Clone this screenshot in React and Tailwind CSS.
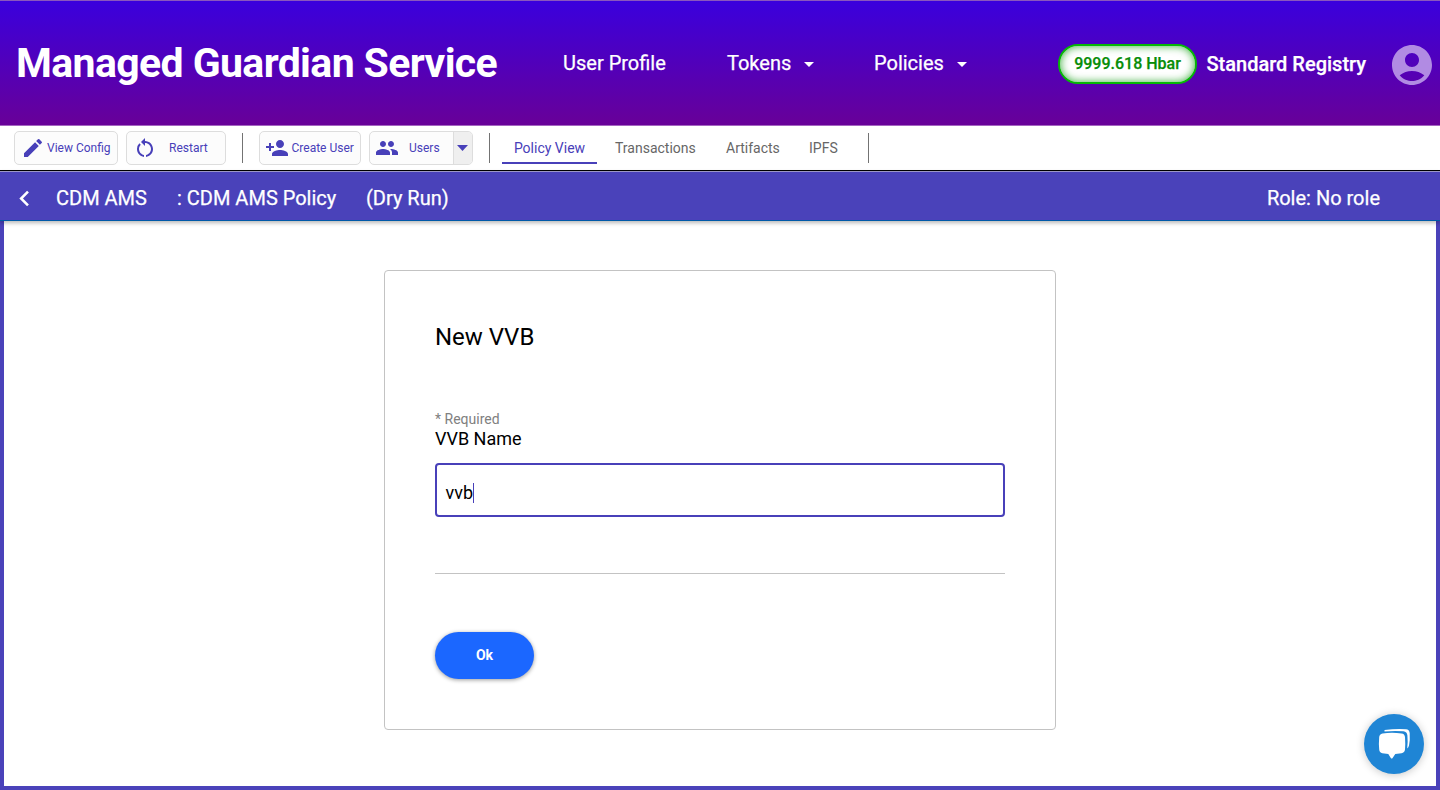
import { MdEdit, MdRestartAlt, MdPersonAdd, MdPeople, MdNavigateBefore, MdAccountCircle } from "react-icons/md";

function NavItem({ label, className, caret }) {
  return (
    <div className={"flex items-center text-[20px] leading-6 text-white [-webkit-text-stroke:0.25px_white] " + className}>
      <span>{label}</span>
      {caret && (
        <svg width="10" height="5" viewBox="0 0 10 5" className="ml-auto mt-[2px] shrink-0">
          <path d="M0 0h10L5 5z" fill="#fff" />
        </svg>
      )}
    </div>
  );
}

function Divider({ className }) {
  return <div className={"h-[30px] w-px shrink-0 bg-[#737373] " + className} />;
}

function ToolButton({ icon: Icon, label, className, labelClass }) {
  return (
    <button className={"flex h-[34px] shrink-0 items-center whitespace-nowrap rounded-[5px] border border-[#dddddd] bg-[#fcfcfc] text-[12px] text-[#4840b9] " + className}>
      <Icon size={24} className="shrink-0" />
      <span className={labelClass}>{label}</span>
    </button>
  );
}

function Header() {
  return (
    <header className="flex h-[126px] items-center whitespace-nowrap border-b border-t border-b-[#a465c0] border-t-[#8a57bd] bg-linear-to-b/srgb from-[#3a00dd] to-[#680098]">
      <h1 className="ml-4 w-[547px] text-[41px] font-bold leading-[48px] tracking-[-0.62px] text-white">Managed Guardian Service</h1>
      <nav className="flex items-center">
        <NavItem label="User Profile" className="w-[164px]" />
        <NavItem label="Tokens" caret className="w-[87px]" />
        <NavItem label="Policies" caret className="ml-[60px] w-[93px]" />
      </nav>
      <div className="ml-auto flex items-center">
        <div className="mt-[2px] flex h-10 w-[139px] items-center justify-center rounded-full border-2 border-[#06b806] bg-white text-[16px] font-medium text-[#078d07] shadow-[inset_0_0_8px_rgba(6,152,6,0.8)] [-webkit-text-stroke:0.25px_#078d07]">
          9999.618 Hbar
        </div>
        <div className="ml-[9.500px] mt-[2px] w-[181.500px] text-[20px] font-medium text-white [-webkit-text-stroke:0.25px_white]">Standard Registry</div>
        <MdAccountCircle size={48} className="mr-1 mt-1 text-[#b18be3]" />
      </div>
    </header>
  );
}

function Toolbar() {
  return (
    <div className="flex h-[45px] items-center border-b border-black bg-white pb-px">
      <ToolButton icon={MdEdit} label="View Config" className="ml-[14px] w-[104px] pl-[5.500px]" labelClass="ml-[2.500px]" />
      <ToolButton icon={MdRestartAlt} label="Restart" className="ml-2 w-[100px] pl-[5.500px]" labelClass="ml-[12.500px]" />
      <Divider className="ml-4" />
      <ToolButton icon={MdPersonAdd} label="Create User" className="ml-4 w-[102px] pl-[5px]" labelClass="ml-[2.500px]" />
      <div className="ml-2 flex h-[34px] w-[104px] shrink-0 overflow-hidden rounded-[5px] border border-[#dddddd] bg-[#fcfcfc] text-[12px] text-[#4840b9]">
        <div className="flex flex-1 items-center pl-[5px]">
          <MdPeople size={24} className="shrink-0" />
          <span className="ml-[10px]">Users</span>
        </div>
        <div className="flex w-[19px] items-center border-l border-[#dddddd] bg-[#efefef] pl-[3px]">
          <svg width="11" height="6" viewBox="0 0 11 6">
            <path d="M0 0h11L5.500 6z" fill="#4840b9" />
          </svg>
        </div>
      </div>
      <Divider className="ml-4" />
      <div className="ml-3 flex h-8 text-[14px] text-[#666666]">
        <div className="flex h-8 w-[95px] items-center justify-center border-b-2 border-[#4840b9] pt-1 text-[#4840b9]">Policy View</div>
        <div className="ml-[18px] flex h-[30px] w-[111px] items-center pt-1">Transactions</div>
        <div className="flex h-[30px] w-[83px] items-center pt-1">Artifacts</div>
        <div className="flex h-[30px] w-[59px] items-center pt-1">IPFS</div>
      </div>
      <Divider />
    </div>
  );
}

function PolicyBar() {
  return (
    <div className="relative flex h-[50px] items-center whitespace-nowrap border-b border-t border-b-[#0059a8] border-t-[#9b97c8] bg-[#4a42ba] pt-1 text-[20px] text-white shadow-[0_2px_4px_rgba(0,0,0,0.28)] [-webkit-text-stroke:0.25px_white]">
      <MdNavigateBefore size={31} className="ml-[9px] shrink-0" />
      <span className="ml-4 w-[121px]">CDM AMS</span>
      <span className="w-[189px]">: CDM AMS Policy</span>
      <span>(Dry Run)</span>
      <span className="ml-auto mr-[60px]">Role: No role</span>
    </div>
  );
}

function VvbForm() {
  return (
    <section className="flex h-[460px] w-[672px] flex-col rounded border border-[#c3c3c3] px-[50px] text-black">
      <h2 className="mt-[50px] text-[24px] leading-8">New VVB</h2>
      <div className="mt-[58px] text-[14px] leading-4 text-[#808080]">* Required</div>
      <label className="mt-[2px] text-[18px] leading-5">VVB Name</label>
      <div className="mt-[14px] flex h-[54px] items-center rounded border-2 border-[#4840b9] pl-[8.500px] pt-[5px] text-[18px]">
        <span>vvb</span>
        <span className="-ml-[0.5px] h-5 w-px bg-[#4840b9]" />
      </div>
      <div className="mt-14 h-px shrink-0 bg-[#c3c3c3]" />
      <button className="mt-[58px] h-[47px] w-[99px] shrink-0 rounded-full bg-[#1b67ff] text-[14px] font-bold text-white shadow-[0_1px_4px_rgba(0,0,0,0.4)]">Ok</button>
    </section>
  );
}

function ChatLauncher() {
  return (
    <button className="absolute left-[1364px] top-[714px] flex h-[60px] w-[60px] items-center justify-center rounded-full bg-[#1f85d5] shadow-[0_1px_8px_rgba(0,0,0,0.22)]">
      <svg width="60" height="60" viewBox="0 0 60 60" fill="#fff">
        <path d="M20.500 16Q32 14.700 42 15.300Q45.300 15.600 45.700 19Q46.200 26 45 31.500Q44.500 33.700 43.200 34.500Q44 28 43.400 21.500Q43 17.700 39.500 17.300Q30 16.500 20.500 17.500Z" />
        <path d="M18.500 19.400Q28 18.300 37.500 19.400Q40.700 19.800 41 23Q41.500 30 41 35.500Q40.600 38.700 37.500 39.200L31.300 39.900L28.600 44Q27.700 45.200 26.800 44L24.300 39.900L18.300 39.200Q15.500 38.700 15.200 35.500Q14.600 30 15.200 23Q15.500 19.900 18.500 19.400Z" />
      </svg>
    </button>
  );
}

export default function App() {
  return (
    <div className="relative flex h-[790px] w-[1440px] flex-col overflow-hidden bg-white font-[Roboto,sans-serif]">
      <Header />
      <Toolbar />
      <PolicyBar />
      <main className="flex flex-1 justify-center border-x-4 border-b-4 border-[#4a42ba] pt-[49px]">
        <VvbForm />
      </main>
      <ChatLauncher />
    </div>
  );
}
